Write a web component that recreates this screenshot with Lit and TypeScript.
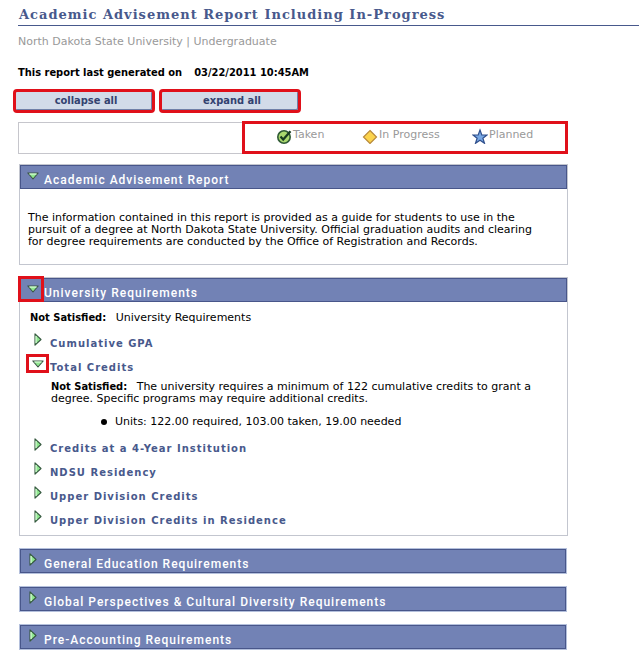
import { LitElement, html, css, svg, nothing } from "lit";
import { customElement, property, state } from "lit/decorators.js";
import { classMap } from "lit/directives/class-map.js";

const arrowDown = svg`
  <path d="M0.8 1H11.2L6 7Z" fill="#8fe88f" stroke="#3d5548" stroke-width="1.1" stroke-linejoin="round" />
  <path d="M2.5 2H9.5" stroke="#e9ffe9" stroke-width="1" />`;

const arrowRight = svg`
  <path d="M1 0.8L7 6.5L1 12.2Z" fill="#8fe88f" stroke="#35573f" stroke-width="1.1" stroke-linejoin="round" />
  <path d="M2 3V10" stroke="#e9ffe9" stroke-width="1" />`;

@customElement("fold-toggle")
export class FoldToggle extends LitElement {
  @property() label = "";
  @property({ type: Boolean }) open = false;
  @property({ type: Boolean }) marked = false;
  @property({ type: Boolean }) bar = false;

  static styles = css`
    :host { display: block; }
    .toggle {
      display: flex;
      align-items: flex-start;
      width: 100%;
      height: 24px;
      margin: 0;
      padding: 0;
      border: 0;
      background: none;
      color: #48598c;
      font: bold 10px/24px "DejaVu Sans", sans-serif;
      letter-spacing: 1px;
      text-align: left;
      white-space: nowrap;
      cursor: pointer;
    }
    .toggle.bar {
      box-sizing: border-box;
      border: 1px solid #48568a;
      background: #7282b5;
      color: #fff;
      font: 500 12px/28px Roboto, sans-serif;
      letter-spacing: 1px;
    }
    .icon {
      position: relative;
      display: flex;
      flex: none;
      align-items: flex-start;
      justify-content: center;
      width: 24px;
      height: 24px;
    }
    .bar .icon { width: 23px; }
    .icon svg { display: block; margin-top: 1px; }
    .icon.down svg { margin-top: 4px; }
    .bar .icon svg { margin-top: 3px; }
    .bar .icon.down svg { margin-top: 6px; }
    .marked::after {
      content: "";
      position: absolute;
      inset: -2px 1px 7px 0;
      border: 3px solid #e0101a;
    }
    .bar .marked::after { inset: -3px 0 1px -3px; }
  `;

  render() {
    return html`
      <button class=${classMap({ toggle: true, bar: this.bar })} type="button" aria-expanded=${this.open}>
        <span class=${classMap({ icon: true, down: this.open, marked: this.marked })}>
          ${this.open
            ? html`<svg width="12" height="8" viewBox="0 0 12 8" aria-hidden="true">${arrowDown}</svg>`
            : html`<svg width="8" height="13" viewBox="0 0 8 13" aria-hidden="true">${arrowRight}</svg>`}
        </span>
        <span>${this.label}</span>
      </button>
    `;
  }
}

interface Section {
  id: string;
  title: string;
}

const closedSections: Section[] = [
  { id: "general", title: "General Education Requirements" },
  { id: "global", title: "Global Perspectives & Cultural Diversity Requirements" },
  { id: "accounting", title: "Pre-Accounting Requirements" },
];

const laterRequirements: Section[] = [
  { id: "four-year", title: "Credits at a 4-Year Institution" },
  { id: "residency", title: "NDSU Residency" },
  { id: "upper", title: "Upper Division Credits" },
  { id: "upper-residence", title: "Upper Division Credits in Residence" },
];

@customElement("app-root")
export class AppRoot extends LitElement {
  @state() private open = new Set(["report", "university", "total"]);

  static styles = css`
    :host {
      display: block;
      padding: 5px 1px 6px 18px;
      background: #fff;
      color: #000;
      font: 11px/12px "DejaVu Sans", sans-serif;
    }
    h1, h2, h3, p, ul { margin: 0; padding: 0; font-weight: normal; }
    .title {
      padding-left: 1px;
      border-bottom: 1px solid #48598c;
      color: #48598c;
      font: bold 13px/20px "DejaVu Serif", serif;
      letter-spacing: 1px;
      white-space: nowrap;
    }
    .subtitle { margin-top: 10px; color: #999; }
    .generated { display: flex; gap: 12px; margin-top: 19px; }
    .strong, .generated {
      font-weight: bold;
      font-family: "DejaVu Sans Condensed", "DejaVu Sans", sans-serif;
    }
    .actions { display: flex; gap: 4px; margin: 10px 0 9px -5px; }
    .action {
      width: 142px;
      height: 24px;
      padding: 0 0 0 4px;
      border: 3px solid #e0101a;
      border-radius: 4px;
      background: #d2dbe9;
      box-shadow: inset -1px -1px #7080a8;
      color: #334270;
      font: bold 11px/18px "DejaVu Sans Condensed", "DejaVu Sans", sans-serif;
    }
    .main { display: flex; flex-direction: column; margin-right: 71px; }
    .legend {
      display: flex;
      justify-content: flex-end;
      border: 1px solid #c6c6cc;
      margin-bottom: 10px;
    }
    .keys {
      box-sizing: border-box;
      display: grid;
      grid-template-columns: 86px 110px 1fr;
      width: 326px;
      height: 33px;
      margin: -2px -1px -1px 0;
      padding: 4px 0 0 31px;
      border: 3px solid #e0101a;
      list-style: none;
      color: #999;
      line-height: 14px;
    }
    .key { display: flex; gap: 1px; }
    .key svg { display: block; }
    .sections { display: flex; flex-direction: column; gap: 12px; padding-left: 1px; }
    .panel { border: 1px solid #c3c6cf; }
    .folded { margin-right: 1px; border-color: #b4c0dc; }
    .intro { padding: 23px 24px 16px 8px; }
    .status { padding: 10px 10px 8px; }
    .strong { margin-right: 6px; }
    .rows { padding: 0 6px 2px; }
    .detail { padding: 1px 25px 9px; }
    .units { margin: 11px 0 0 50px; list-style: none; }
    .unit { display: flex; align-items: center; gap: 8px; }
    .unit::before {
      content: "";
      flex: none;
      width: 6px;
      height: 6px;
      border-radius: 50%;
      background: #000;
    }
  `;

  private toggle(id: string) {
    const next = new Set(this.open);
    next.has(id) ? next.delete(id) : next.add(id);
    this.open = next;
  }

  private row(item: Section, marked = false) {
    return html`<h3>
      <fold-toggle .label=${item.title} ?open=${this.open.has(item.id)} ?marked=${marked}
        @click=${() => this.toggle(item.id)}></fold-toggle>
    </h3>`;
  }

  private panel(item: Section, body: unknown = nothing, marked = false) {
    const open = this.open.has(item.id);
    return html`<section class=${classMap({ panel: true, folded: !open })}>
      <h2>
        <fold-toggle bar .label=${item.title} ?open=${open} ?marked=${marked}
          @click=${() => this.toggle(item.id)}></fold-toggle>
      </h2>
      ${open ? body : nothing}
    </section>`;
  }

  render() {
    return html`
      <h1 class="title">Academic Advisement Report Including In-Progress</h1>
      <p class="subtitle">North Dakota State University | Undergraduate</p>
      <p class="generated"><span>This report last generated on</span><span>03/22/2011 10:45AM</span></p>
      <div class="actions">
        <button class="action" type="button" @click=${() => (this.open = new Set())}>collapse all</button>
        <button class="action" type="button"
          @click=${() => (this.open = new Set(["report", "university", "total"]))}>expand all</button>
      </div>
      <main class="main">
        <div class="legend">
          <ul class="keys">
            <li class="key">
              <svg width="16" height="16" viewBox="0 0 16 16" aria-hidden="true">
                <circle cx="8" cy="9" r="6.2" fill="#a9d86e" stroke="#2f5a35" stroke-width="1.6" />
                <path d="M4.5 8.5L7.2 11.5L14.5 3.2" fill="none" stroke="#183c20" stroke-width="2.2" />
              </svg>Taken
            </li>
            <li class="key">
              <svg width="16" height="16" viewBox="0 0 16 16" aria-hidden="true">
                <path d="M8 2.5L14.5 9L8 15.5L1.5 9Z" fill="#fbd34c" stroke="#b88a3c" stroke-width="1.2" />
              </svg>In Progress
            </li>
            <li class="key">
              <svg width="16" height="16" viewBox="0 0 16 16" aria-hidden="true">
                <path d="M8 2L9.8 7H15L10.9 10.2L12.5 15.3L8 12.2L3.5 15.3L5.1 10.2L1 7H6.2Z"
                  fill="#78a8e4" stroke="#2f4f8c" stroke-width="1.2" />
              </svg>Planned
            </li>
          </ul>
        </div>
        <div class="sections">
          ${this.panel(
            { id: "report", title: "Academic Advisement Report" },
            html`<p class="intro">
              The information contained in this report is provided as a guide for students to use in the
              pursuit of a degree at North Dakota State University. Official graduation audits and clearing
              for degree requirements are conducted by the Office of Registration and Records.
            </p>`
          )}
          ${this.panel(
            { id: "university", title: "University Requirements" },
            html`<p class="status"><b class="strong">Not Satisfied:</b> University Requirements</p>
              <div class="rows">
                ${this.row({ id: "gpa", title: "Cumulative GPA" })}
                ${this.row({ id: "total", title: "Total Credits" }, true)}
                ${this.open.has("total")
                  ? html`<div class="detail">
                      <p><b class="strong">Not Satisfied:</b> The university requires a minimum of 122 cumulative
                        credits to grant a degree. Specific programs may require additional credits.</p>
                      <ul class="units"><li class="unit">Units: 122.00 required, 103.00 taken, 19.00 needed</li></ul>
                    </div>`
                  : nothing}
                ${laterRequirements.map((item) => this.row(item))}
              </div>`,
            true
          )}
          ${closedSections.map((item) => this.panel(item))}
        </div>
      </main>
    `;
  }
}
